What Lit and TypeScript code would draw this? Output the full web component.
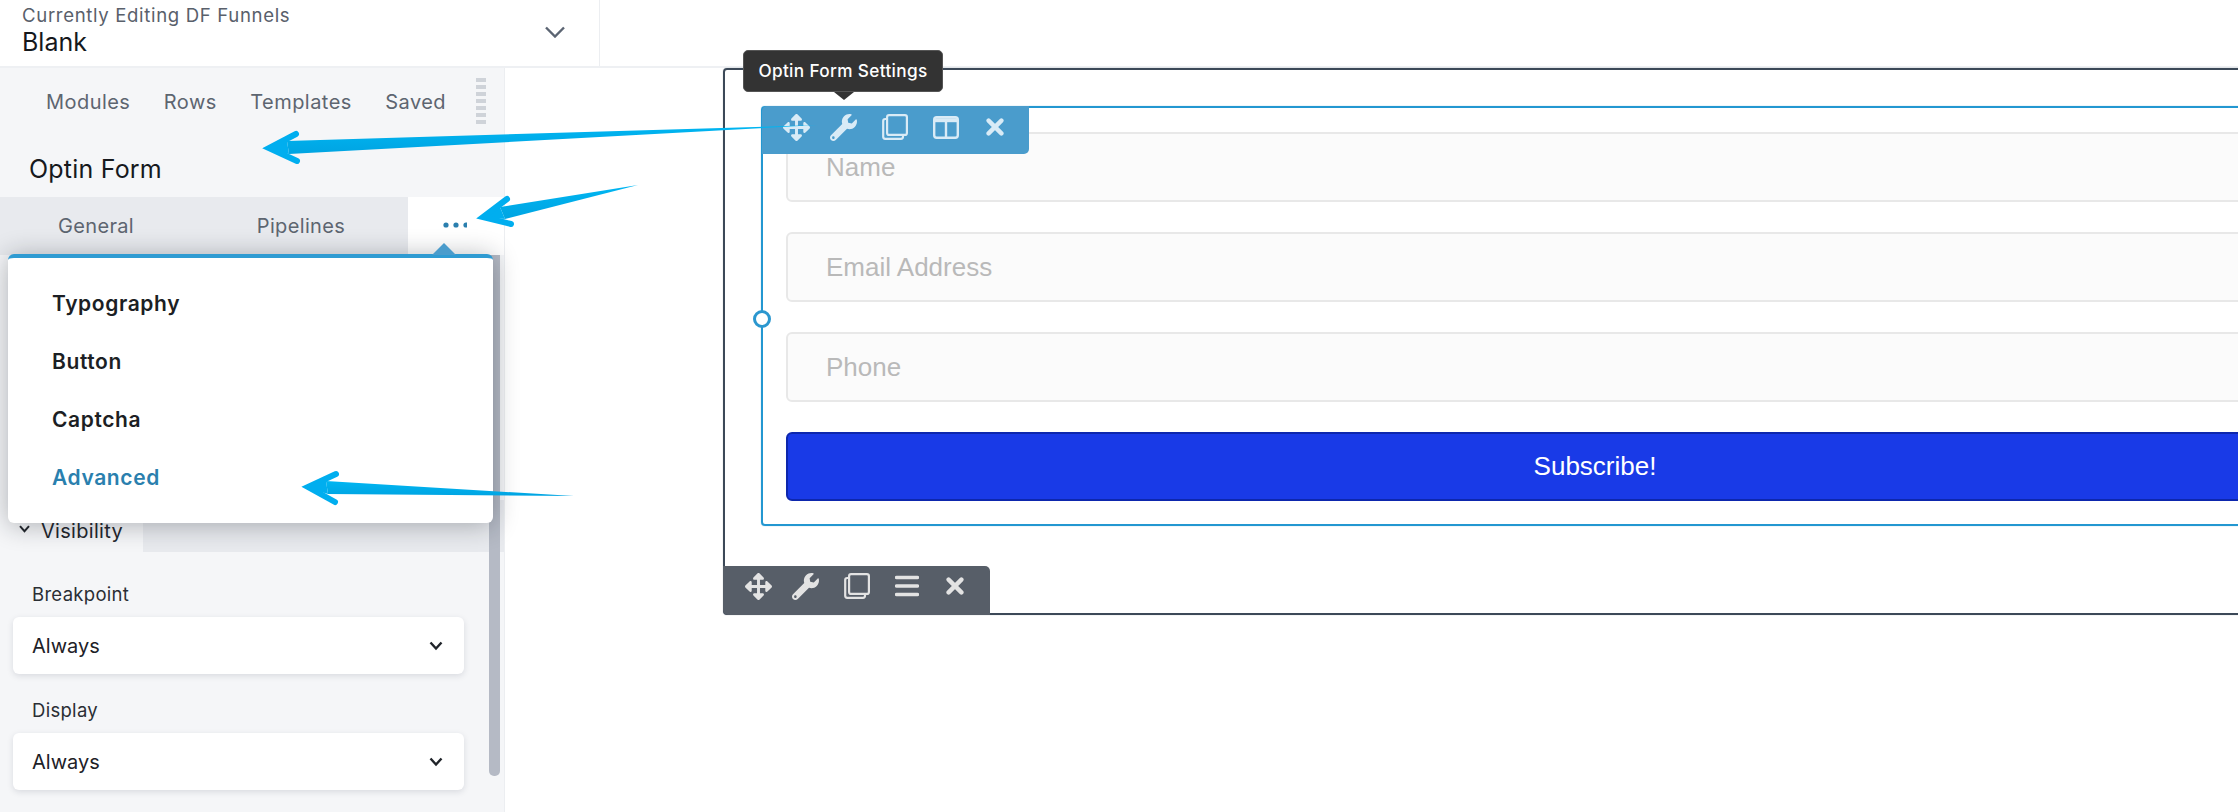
import { LitElement, html, css, svg } from "lit";
import { customElement } from "lit/decorators.js";

const moveD = "M352.201 425.775l-79.196 79.196c-9.373 9.373-24.568 9.373-33.941 0l-79.196-79.196c-15.119-15.119-4.411-40.971 16.971-40.97h51.162L228 284H127.196v51.162c0 21.382-25.851 32.09-40.971 16.971L7.029 272.937c-9.373-9.373-9.373-24.569 0-33.941L86.225 159.8c15.119-15.119 40.971-4.411 40.971 16.971V228H228V127.196h-51.23c-21.382 0-32.09-25.851-16.971-40.971l79.196-79.196c9.373-9.373 24.568-9.373 33.941 0l79.196 79.196c15.119 15.119 4.411 40.971-16.971 40.971h-51.162V228h100.804v-51.162c0-21.382 25.851-32.09 40.97-16.971l79.196 79.196c9.373 9.373 9.373 24.569 0 33.941L425.773 352.2c-15.119 15.119-40.971 4.411-40.97-16.971V284H284v100.804h51.23c21.382 0 32.09 25.851 16.971 40.971z";
const wrenchD = "M507.73 109.1c-2.24-9.03-13.54-12.09-20.12-5.51l-74.36 74.36-67.88-11.31-11.31-67.88 74.36-74.36c6.62-6.62 3.43-17.9-5.66-20.16-47.38-11.74-99.55.91-136.58 37.93-39.64 39.64-50.55 97.1-34.05 147.2L18.74 402.76c-24.99 24.99-24.99 65.51 0 90.5 24.99 24.99 65.51 24.99 90.5 0l213.21-213.21c50.12 16.71 107.47 5.68 147.37-34.22 37.07-37.07 49.7-89.32 37.91-136.73zM64 472c-13.25 0-24-10.75-24-24 0-13.26 10.75-24 24-24s24 10.74 24 24c0 13.25-10.75 24-24 24z";

const move = html`<svg class="ic move" viewBox="0 0 512 512"><path fill="currentColor" d=${moveD}/></svg>`;
const wrench = html`<svg class="ic wrench" viewBox="0 0 512 512"><path fill="currentColor" d=${wrenchD}/></svg>`;
const copy = html`<svg class="ic copy" viewBox="0 0 26 26" fill="none" stroke="currentColor" stroke-width="2.2">
  <rect x="5.1" y="1.1" width="19.8" height="19.8" rx="2"/>
  <path d="M5 5H3.2a2 2 0 0 0-2 2v15.8a2 2 0 0 0 2 2H19a2 2 0 0 0 2-2V21"/></svg>`;
const cols = html`<svg class="ic cols" viewBox="0 0 26 23" fill="none" stroke="currentColor">
  <rect x="1.2" y="1.2" width="23.6" height="20.6" rx="2.5" stroke-width="2.4"/>
  <path d="M1 4.2H25" stroke-width="4"/><path d="M13 3V22" stroke-width="2.4"/></svg>`;
const close = html`<svg class="ic x" viewBox="0 0 18 18" fill="none" stroke="currentColor" stroke-width="4.4" stroke-linecap="round">
  <path d="M2.6 2.6 15.4 15.4M15.4 2.6 2.6 15.4"/></svg>`;
const bars = html`<svg class="ic bars" viewBox="0 0 24 22" fill="none" stroke="currentColor" stroke-width="3.4" stroke-linecap="round">
  <path d="M1.5 2.5H22.5M1.5 11H22.5M1.5 19.5H22.5"/></svg>`;
const chev = html`<svg class="sel-chev" viewBox="0 0 14 10" fill="none" stroke="#20242a" stroke-width="2.4"><path d="M1.5 1.5 7 7.5 12.5 1.5"/></svg>`;

function arrow(tail: number[], tip: number[], up: number[], low: number[], s1: number[], s2: number[]) {
  const p = (a: number[]) => `${a[0]},${a[1]}`;
  const inset = [tip[0] + 3, tip[1]];
  return svg`
    <polygon fill="url(#ag)" points="${p(s1)} ${p(tail)} ${p(s2)}"/>
    <polygon fill="#00aeef" points="${p(tip)} ${p(s1)} ${p(s2)}"/>
    <path fill="none" stroke="#00aeef" stroke-width="6" stroke-linecap="round" d="M${p(up)}L${p(inset)}L${p(low)}"/>`;
}

@customElement("app-root")
export class AppRoot extends LitElement {
  static styles = css`
    :host { display: block; position: relative; width: 2238px; height: 812px; overflow: hidden; background: #fff;
      font-family: Inter, "Liberation Sans", sans-serif; color: #1d2127; }
    * { box-sizing: border-box; }

    .top { height: 68px; display: flex; border-bottom: 2px solid #eef0f3; }
    .doc { width: 600px; border-right: 1px solid #eceef1; padding: 5px 34px 0 22px; display: flex; align-items: center; justify-content: space-between; }
    .doc-text { align-self: flex-start; }
    .doc-sub { font-size: 18.6px; line-height: 20px; color: #59606b; letter-spacing: .65px; }
    .doc-name { font-size: 25px; line-height: 35px; color: #15181c; }
    .doc-chev { width: 20px; height: 12px; margin-bottom: 8px; }

    .main { display: flex; height: 744px; }
    .side { width: 505px; flex: none; background: #f5f6f8; border-right: 1px solid #eceef1; display: flex; flex-direction: column; position: relative; }
    .side > * { flex: none; }
    .lib { height: 68px; display: flex; align-items: center; padding: 0 17px 0 46px; gap: 33.5px; font-size: 20px; color: #5d6570; letter-spacing: .45px; }
    .lib .grip { flex: none; width: 10px; height: 47px; margin: -2px 0 0 -4px; background: repeating-linear-gradient(#cfd3d9 0 4px, transparent 4px 7px); }
    .title { height: 61px; padding: 19px 0 0 29px; font-size: 25px; line-height: 28px; letter-spacing: .2px; color: #16191d; }
    .tabs { height: 58px; display: flex; background: #e8eaee; font-size: 20px; color: #5d6570; letter-spacing: .35px; }
    .tab { padding-top: 17px; line-height: 24px; text-align: center; }
    .tab.a { width: 192px; }
    .tab.b { width: 216px; padding-left: 2px; }
    .tab.more { flex: 1; background: #fff; }
    .dots { display: block; width: 26px; height: 6px; margin: 8px 0 0 35px; }
    .spacer { height: 245px; }
    .vis-row { height: 52px; display: flex; }
    .vis { width: 143px; padding: 19px 0 0 19px; display: flex; gap: 11px; font-size: 20px; line-height: 24px; color: #23272d; letter-spacing: .3px; }
    .vis svg { width: 11px; height: 8px; margin-top: 6px; }
    .vis-fill { flex: 1; background: #e8eaee; }
    .fields { padding: 30px 40px 0 13px; }
    .fld label { display: block; padding-left: 19px; font-size: 18.5px; line-height: 24px; color: #2a2e34; letter-spacing: .3px; }
    .sel { height: 57px; margin: 11px 0 24px; background: #fff; border-radius: 6px; box-shadow: 0 2px 6px rgba(30,40,60,.13);
      display: flex; align-items: center; justify-content: space-between; padding: 0 21px 0 19px; font-size: 20px; color: #1d2127; }
    .sel-chev { width: 14px; height: 10px; }

    .scroll { position: absolute; left: 489px; top: 187px; width: 11px; height: 521px; background: #b5bac5; border-radius: 0 0 5px 5px; }
    .menu { position: absolute; left: 8px; top: 186px; width: 485px; height: 269px; background: #fff; border-top: 4px solid #2f9bd2;
      border-radius: 6px; box-shadow: 0 2px 26px rgba(20,25,35,.32); padding-top: 22px; }
    .menu::before { content: ""; position: absolute; left: 424px; top: -15px; width: 24px; height: 12px; background: #4a9ccc; clip-path: polygon(50% 0, 100% 100%, 0 100%); }
    .item { height: 58px; padding-left: 44px; font-size: 21px; font-weight: 600; line-height: 48px; color: #1c1f24; letter-spacing: .6px; }
    .item.on { color: #2a7fae; }

    .canvas { flex: 1; min-width: 0; padding-left: 218px; }
    .row-box { position: relative; width: 1800px; height: 547px; border: 2px solid #3c4958; border-radius: 4px; padding: 36px 0 0 36px; box-shadow: 0 0 1px rgba(60,73,88,.55); }
    .mod-box { position: relative; width: 1668px; height: 420px; border: 2px solid #2397d1; border-radius: 4px; padding: 24px 23px 0; display: flex; flex-direction: column; gap: 30px; box-shadow: 0 0 1px rgba(35,151,209,.7); }
    .inp { height: 70px; border: 2px solid #e8e8e8; border-radius: 6px; background: #fbfbfb; padding-left: 38px; display: flex; align-items: center;
      font: 26px "Liberation Sans", Arial, sans-serif; color: #b9b9b9; }
    .btn { height: 69px; border: 2px solid #0d27ad; border-radius: 6px; background: #193ae7; display: flex; align-items: center; justify-content: center;
      font: 26px "Liberation Sans", Arial, sans-serif; color: #fff; }

    .bar { position: absolute; display: flex; align-items: center; gap: 25px; }
    .bar.blue { left: -1px; top: -2px; width: 267px; height: 48px; padding: 0 0 6px 21px; background: #4a9ccc; color: #d9ebf6; border-radius: 5px 0 5px 0; }
    .bar.dark { left: -2px; bottom: -2px; width: 267px; height: 49px; padding: 0 0 9px 22px; background: #575e68; color: #e3e3e3; border-radius: 0 5px 0 5px; }
    .ic { flex: none; display: block; }
    .move, .wrench { width: 27px; height: 27px; }
    .wrench { margin-left: -5px; }
    .copy { width: 26px; height: 26px; }
    .cols { width: 26px; height: 23px; }
    .bars { width: 24px; height: 22px; }
    .x { width: 18px; height: 18px; margin-left: 2px; }

    .handle { position: absolute; left: -10px; top: 202px; width: 18px; height: 18px; border-radius: 50%; background: #fff; border: 3px solid #2b97cf; }
    .tip { position: absolute; left: 18px; top: -20px; width: 200px; height: 42px; padding-bottom: 2px; background: #333; border: 1px solid #555; border-radius: 5px; color: #fff;
      display: flex; align-items: center; justify-content: center; font-size: 17.2px; font-weight: 500; letter-spacing: .35px; }
    .tip::after { content: ""; position: absolute; left: 90px; top: 41px; width: 20px; height: 8px; background: #333; clip-path: polygon(0 0, 100% 0, 50% 100%); }

    .arrows { position: absolute; left: 0; top: 0; width: 2238px; height: 812px; pointer-events: none; }
  `;

  render() {
    return html`
      <div class="top">
        <div class="doc">
          <div class="doc-text">
            <div class="doc-sub">Currently Editing DF Funnels</div>
            <div class="doc-name">Blank</div>
          </div>
          <svg class="doc-chev" viewBox="0 0 20 12" fill="none" stroke="#5b6472" stroke-width="2.4"><path d="M1 1.5 10 10.5 19 1.5"/></svg>
        </div>
      </div>
      <div class="main">
        <aside class="side">
          <div class="lib"><span>Modules</span><span>Rows</span><span>Templates</span><span>Saved</span><div class="grip"></div></div>
          <div class="title">Optin Form</div>
          <div class="tabs">
            <div class="tab a">General</div>
            <div class="tab b">Pipelines</div>
            <div class="tab more">
              <svg class="dots" viewBox="0 0 26 6"><g fill="#2a7fae"><circle cx="3" cy="3" r="2.6"/><circle cx="13" cy="3" r="2.6"/><path d="M23 .4a2.6 2.6 0 0 0 0 5.2h1V.4z"/></g></svg>
            </div>
          </div>
          <div class="spacer"></div>
          <div class="vis-row">
            <div class="vis">
              <svg viewBox="0 0 11 8" fill="none" stroke="#23272d" stroke-width="2"><path d="M1 1.2 5.5 6.2 10 1.2"/></svg>
              <span>Visibility</span>
            </div>
            <div class="vis-fill"></div>
          </div>
          <div class="fields">
            <div class="fld"><label>Breakpoint</label><div class="sel"><span>Always</span>${chev}</div></div>
            <div class="fld"><label>Display</label><div class="sel"><span>Always</span>${chev}</div></div>
          </div>
          <div class="scroll"></div>
          <div class="menu">
            <div class="item">Typography</div>
            <div class="item">Button</div>
            <div class="item">Captcha</div>
            <div class="item on">Advanced</div>
          </div>
        </aside>
        <section class="canvas">
          <div class="row-box">
            <div class="mod-box">
              <div class="inp">Name</div>
              <div class="inp">Email Address</div>
              <div class="inp">Phone</div>
              <div class="btn">Subscribe!</div>
              <div class="handle"></div>
              <div class="bar blue">${move}${wrench}${copy}${cols}${close}</div>
            </div>
            <div class="bar dark">${move}${wrench}${copy}${bars}${close}</div>
            <div class="tip">Optin Form Settings</div>
          </div>
        </section>
      </div>
      <svg class="arrows" viewBox="0 0 2238 812">
        <defs><linearGradient id="ag" x1="0" y1="0" x2="0" y2="1"><stop offset="0" stop-color="#00b6f2"/><stop offset="1" stop-color="#00a4e2"/></linearGradient></defs>
        ${arrow([818, 125], [266, 148], [296, 134], [297, 161], [287, 141], [289, 154])}
        ${arrow([638, 185], [480, 217], [507, 199], [511, 224], [500, 207], [505, 219])}
        ${arrow([574, 496], [305, 487], [336, 474], [335, 502], [326, 481], [328, 494])}
      </svg>
    `;
  }
}
